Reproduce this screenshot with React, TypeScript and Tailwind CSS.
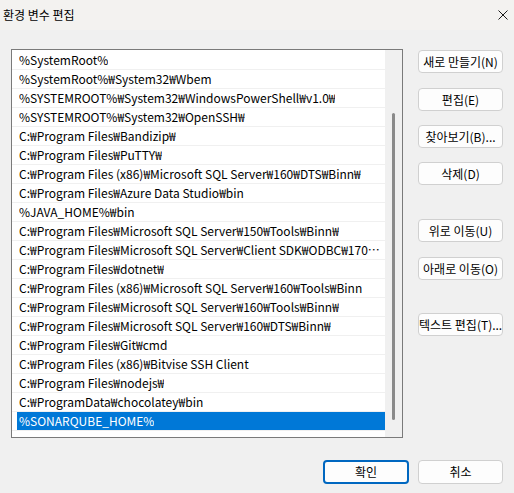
const paths = [
  "%SystemRoot%",
  "%SystemRoot%₩System32₩Wbem",
  "%SYSTEMROOT%₩System32₩WindowsPowerShell₩v1.0₩",
  "%SYSTEMROOT%₩System32₩OpenSSH₩",
  "C:₩Program Files₩Bandizip₩",
  "C:₩Program Files₩PuTTY₩",
  "C:₩Program Files (x86)₩Microsoft SQL Server₩160₩DTS₩Binn₩",
  "C:₩Program Files₩Azure Data Studio₩bin",
  "%JAVA_HOME%₩bin",
  "C:₩Program Files₩Microsoft SQL Server₩150₩Tools₩Binn₩",
  "C:₩Program Files₩Microsoft SQL Server₩Client SDK₩ODBC₩170₩Tools₩Binn₩",
  "C:₩Program Files₩dotnet₩",
  "C:₩Program Files (x86)₩Microsoft SQL Server₩160₩Tools₩Binn",
  "C:₩Program Files₩Microsoft SQL Server₩160₩Tools₩Binn₩",
  "C:₩Program Files₩Microsoft SQL Server₩160₩DTS₩Binn₩",
  "C:₩Program Files₩Git₩cmd",
  "C:₩Program Files (x86)₩Bitvise SSH Client",
  "C:₩Program Files₩nodejs₩",
  "C:₩ProgramData₩chocolatey₩bin",
  "%SONARQUBE_HOME%",
];

const selected = paths.length - 1;

function SideButton({ label, className = "" }: { label: string; className?: string }) {
  return (
    <button
      className={`h-[23px] w-[85px] rounded-[4px] border border-[#d0d0d0] bg-[#fdfdfd] text-[12px] leading-none text-black whitespace-nowrap overflow-hidden ${className}`}
    >
      {label}
    </button>
  );
}

export default function App() {
  return (
    <div
      className="w-[514px] h-[493px] bg-[#f0f0f0] text-black overflow-hidden select-none"
      style={{ fontFamily: '"Noto Sans CJK KR", "Noto Sans", sans-serif' }}
    >
      {/* title bar */}
      <div className="h-[30px] bg-[#f3f2f0] flex items-center justify-between pl-[3px] pr-[6px]">
        <span className="text-[12px]">환경 변수 편집</span>
        <svg width="10" height="10" viewBox="0 0 10 10">
          <path d="M0.5 0.5 L9.5 9.5 M9.5 0.5 L0.5 9.5" stroke="#1a1a1a" strokeWidth="1" />
        </svg>
      </div>

      <div className="flex pl-[11px] pt-[19px]">
        {/* path list */}
        <div className="w-[392px] h-[389px] border border-[#7a7a7a] bg-white flex">
          <div className="flex-1 min-w-0 pt-[1px]">
            {paths.map((p, i) => (
              <div key={i} className="h-[19px] border-b border-[#f0f0f0] pl-[5px]">
                <div
                  className={`h-[18px] px-[2px] flex items-center text-[12px] whitespace-nowrap overflow-hidden ${
                    i === selected ? "bg-[#0078d7] text-white" : ""
                  }`}
                >
                  <span className="overflow-hidden text-ellipsis">{p}</span>
                </div>
              </div>
            ))}
          </div>
          {/* scrollbar */}
          <div className="w-[17px] bg-[#f0f0f0] flex justify-center pt-[63px]">
            <div className="w-[3px] h-[307px] rounded-full bg-[#8a8a8a]" />
          </div>
        </div>

        {/* action buttons */}
        <div className="ml-[15px] pt-[1px] flex flex-col">
          <SideButton label="새로 만들기(N)" />
          <SideButton label="편집(E)" className="mt-[15px]" />
          <SideButton label="찾아보기(B)..." className="mt-[14px]" />
          <SideButton label="삭제(D)" className="mt-[14px]" />
          <SideButton label="위로 이동(U)" className="mt-[34px]" />
          <SideButton label="아래로 이동(O)" className="mt-[15px]" />
          <SideButton label="텍스트 편집(T)..." className="mt-[33px]" />
        </div>
      </div>

      {/* dialog buttons */}
      <div className="flex justify-end gap-[9px] pr-[11px] mt-[22px]">
        <button className="h-[24px] w-[86px] rounded-[4px] border-2 border-[#0067c0] bg-[#fdfdfd] text-[12px]">
          확인
        </button>
        <button className="h-[24px] w-[85px] rounded-[4px] border border-[#d0d0d0] bg-[#fdfdfd] text-[12px]">
          취소
        </button>
      </div>
    </div>
  );
}
